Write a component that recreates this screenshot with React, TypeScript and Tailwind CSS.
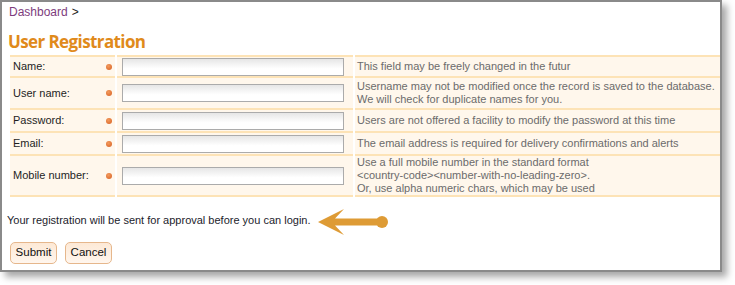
import React from "react";

const rows = [
  { label: "Name:", help: ["This field may be freely changed in the futur"], h: "h-[21px]" },
  {
    label: "User name:",
    help: [
      "Username may not be modified once the record is saved to the database.",
      "We will check for duplicate names for you.",
    ],
    h: "h-[32px]",
  },
  { label: "Password:", help: ["Users are not offered a facility to modify the password at this time"], h: "h-[23px]" },
  { label: "Email:", help: ["The email address is required for delivery confirmations and alerts"], h: "h-[23px]" },
  {
    label: "Mobile number:",
    help: [
      "Use a full mobile number in the standard format",
      "<country-code><number-with-no-leading-zero>.",
      "Or, use alpha numeric chars, which may be used",
    ],
    h: "h-[43px]",
  },
];

export default function App() {
  return (
    <div className="w-[735px] h-[285px] bg-white" style={{ fontFamily: '"Liberation Sans", Arial, sans-serif' }}>
      <div className="w-[722px] h-[272px] border-2 border-[#8a8a8a] bg-white shadow-[5px_5px_7px_rgba(0,0,0,0.35)] overflow-hidden">
        <div className="pl-[7px] pt-[3px] text-[12px] leading-[15px]">
          <span className="text-[#7d3c7d]">Dashboard</span>
          <span className="text-[#222] ml-[4px]">&gt;</span>
        </div>
        <div className="pl-[6px] mt-[12px] mb-[3px] text-[17px] leading-[20px] font-bold text-[#e08a1b] tracking-[-0.6px]" style={{ fontFamily: '"Open Sans", "Liberation Sans", sans-serif' }}>
          User Registration
        </div>
        <table className="ml-[6px] border-separate border-spacing-x-[2px] border-spacing-y-0 w-[716px] text-[11px]">
          <tbody>
            {rows.map((r, i) => (
              <tr key={r.label} className={r.h}>
                <td className={`w-[105px] bg-[#fff7ec] border-t-2 border-[#fde3b6] ${i === rows.length - 1 ? "border-b-2" : ""} pl-[3px] pr-[3px] align-middle text-[#1e1e1e]`}>
                  <div className="flex items-center justify-between">
                    <span>{r.label}</span>
                    <span className="w-[6px] h-[6px] rounded-full bg-[radial-gradient(circle_at_40%_35%,#f39a5c,#d65f22)]" />
                  </div>
                </td>
                <td className={`w-[236px] bg-[#fff7ec] border-t-2 border-[#fde3b6] ${i === rows.length - 1 ? "border-b-2" : ""} pl-[5px] align-middle`}>
                  <div className="w-[222px] h-[18px] border border-[#ababab] bg-linear-to-b from-[#e6e6e6] to-white to-[60%]" />
                </td>
                <td className={`bg-[#fff7ec] border-t-2 border-[#fde3b6] ${i === rows.length - 1 ? "border-b-2" : ""} pl-[2px] align-middle text-[#6b6b6b] leading-[13px]`}>
                  {r.help.map((l) => (
                    <div key={l}>{l}</div>
                  ))}
                </td>
              </tr>
            ))}
          </tbody>
        </table>
        <div className="flex items-center pl-[5px] mt-[15px] h-[16px]">
          <span className="text-[11px] text-[#1c1c2c]">Your registration will be sent for approval before you can login.</span>
          <svg className="ml-[7px] mt-[4px] shrink-0" width="72" height="28" viewBox="0 0 72 28">
            <path d="M0 14 L26 1 L17 10.5 L62 10.5 L62 17.5 L17 17.5 L26 27 Z" fill="#de9b35" />
            <circle cx="64" cy="14" r="6" fill="#de9b35" />
          </svg>
        </div>
        <div className="flex gap-[8px] pl-[8px] mt-[14px]">
          <button className="w-[47px] h-[22px] rounded-[5px] border border-[#e6b78c] bg-linear-to-b from-[#fde9d6] to-[#fff6ee] text-[11.5px] text-[#111]">
            Submit
          </button>
          <button className="w-[47px] h-[22px] rounded-[5px] border border-[#e6b78c] bg-linear-to-b from-[#fde9d6] to-[#fff6ee] text-[11.5px] text-[#111]">
            Cancel
          </button>
        </div>
      </div>
    </div>
  );
}
